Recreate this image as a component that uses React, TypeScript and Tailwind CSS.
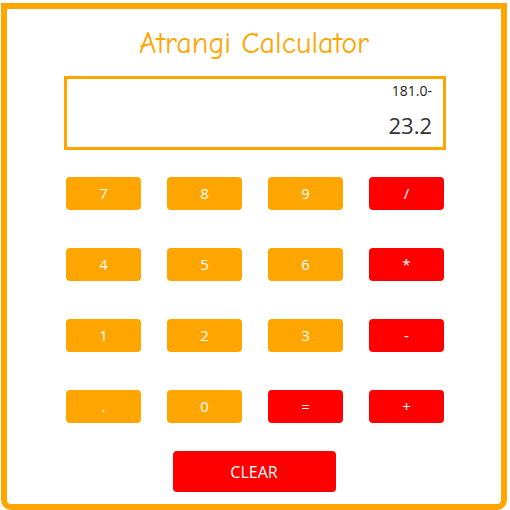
const keys: { label: string; red?: boolean }[] = [
  { label: '7' },
  { label: '8' },
  { label: '9' },
  { label: '/', red: true },
  { label: '4' },
  { label: '5' },
  { label: '6' },
  { label: '*', red: true },
  { label: '1' },
  { label: '2' },
  { label: '3' },
  { label: '-', red: true },
  { label: '.' },
  { label: '0' },
  { label: '=', red: true },
  { label: '+', red: true },
];

export default function App() {
  return (
    <div className="w-[510px] h-[510px] bg-white overflow-hidden pt-[3px] pl-[1px] [font-family:'Open_Sans',sans-serif]">
      <div className="w-[506px] h-[507px] border-[6px] border-[#ffa500] rounded-none rounded-bl-[10px] rounded-br-[10px] flex flex-col items-center">
        <h1 className="mt-[17px] h-[36px] leading-[36px] text-[30px] font-medium text-[#ffa500] [font-family:'Comic_Sans_MS','Comic_Neue',cursive]">
          Atrangi Calculator
        </h1>
        <div className="mt-[14px] ml-[2px] w-[382px] h-[74px] border-[3px] border-[#ffa500] flex flex-col items-end pr-[11px]">
          <div className="mt-[2px] h-[20px] leading-[20px] text-[14px] text-[#222]">181.0-</div>
          <div className="mt-[9px] h-[30px] leading-[30px] text-[22px] text-[#333]">23.2</div>
        </div>
        <div className="mt-[27px] ml-[2px] grid grid-cols-4 gap-x-[26px] gap-y-[38px]">
          {keys.map((k) => (
            <button
              key={k.label}
              className={`w-[75px] h-[33px] rounded-[4px] text-white text-[15px] leading-none ${
                k.red ? 'bg-[#ff0000]' : 'bg-[#ffa500]'
              }`}
            >
              {k.label}
            </button>
          ))}
        </div>
        <button className="mt-[28px] w-[163px] h-[41px] rounded-[4px] bg-[#ff0000] text-white text-[16px]">
          CLEAR
        </button>
      </div>
    </div>
  );
}
